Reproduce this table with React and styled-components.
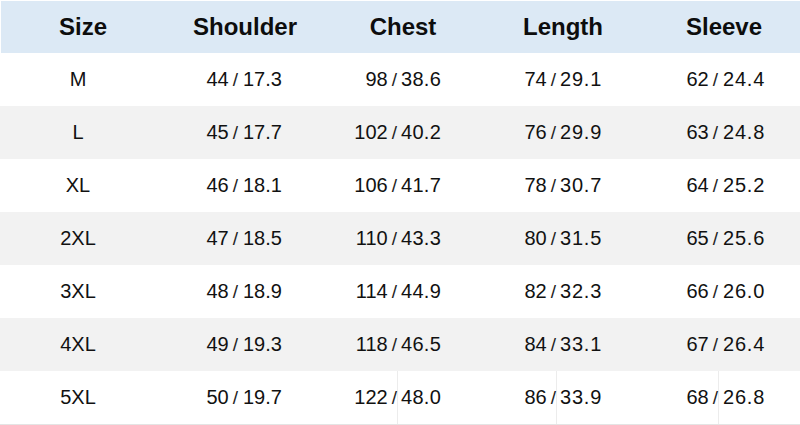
import React from "react";
import styled, { createGlobalStyle } from "styled-components";

const GlobalStyle = createGlobalStyle`
  html, body {
    margin: 0;
    padding: 0;
    background: #ffffff;
  }
  body {
    font-family: "Liberation Sans", Arial, sans-serif;
    color: #111111;
  }
`;

const COLS = "158px 82px 80px 78px 82px 77px 83px 79px 81px";

const Table = styled.div`
  width: 800px;
  padding-top: 1px;
  display: flex;
  flex-direction: column;
  border-bottom: 1px solid #e4e4e4;
`;

const HeaderRow = styled.div`
  display: grid;
  grid-template-columns: ${COLS};
  height: 52px;
  margin-left: 1px;
  background: #dce9f5;
  align-items: center;
`;

const HeadCell = styled.div`
  grid-column: span ${(p) => p.$span || 1};
  text-align: center;
  padding-left: ${(p) => p.$shift || 0}px;
  font-size: 24px;
  font-weight: 700;
  color: #0d0d0d;
  line-height: 1;
`;

const Row = styled.div`
  display: grid;
  grid-template-columns: ${COLS};
  height: 53px;
  background: ${(p) => (p.$shade ? "#f2f2f2" : "#ffffff")};
  align-items: stretch;
`;

const SizeCell = styled.div`
  display: flex;
  align-items: center;
  justify-content: center;
  padding-right: 2px;
  font-size: 20px;
`;

const CmCell = styled.div`
  display: flex;
  align-items: center;
  justify-content: flex-end;
  padding-right: ${(p) => p.$pr}px;
  font-size: 20px;
  border-right: 1px solid ${(p) => (p.$line ? "#ececec" : "transparent")};
`;

const Slash = styled.span`
  margin-left: 4px;
  font-size: 19px;
  color: #222;
`;

const InCell = styled.div`
  display: flex;
  align-items: center;
  justify-content: flex-start;
  padding-left: ${(p) => p.$pl}px;
  letter-spacing: ${(p) => p.$ls}px;
  font-size: 20px;
`;

const headers = [
  { label: "Size", span: 1, shift: 6 },
  { label: "Shoulder", span: 2, shift: 10 },
  { label: "Chest", span: 2, shift: 4 },
  { label: "Length", span: 2, shift: 4 },
  { label: "Sleeve", span: 2, shift: 6 },
];

const pads = [
  { pr: 1, pl: 3, ls: 0 },
  { pr: 0, pl: 3, ls: 0.3 },
  { pr: 0, pl: 3, ls: 0.8 },
  { pr: 0, pl: 4, ls: 0.8 },
];

const lines = [false, true, true, true];

const rows = [
  ["M", [44, "17.3"], [98, "38.6"], [74, "29.1"], [62, "24.4"]],
  ["L", [45, "17.7"], [102, "40.2"], [76, "29.9"], [63, "24.8"]],
  ["XL", [46, "18.1"], [106, "41.7"], [78, "30.7"], [64, "25.2"]],
  ["2XL", [47, "18.5"], [110, "43.3"], [80, "31.5"], [65, "25.6"]],
  ["3XL", [48, "18.9"], [114, "44.9"], [82, "32.3"], [66, "26.0"]],
  ["4XL", [49, "19.3"], [118, "46.5"], [84, "33.1"], [67, "26.4"]],
  ["5XL", [50, "19.7"], [122, "48.0"], [86, "33.9"], [68, "26.8"]],
];

export default function App() {
  return (
    <>
      <GlobalStyle />
      <Table>
        <HeaderRow>
          {headers.map((h) => (
            <HeadCell key={h.label} $span={h.span} $shift={h.shift}>
              {h.label}
            </HeadCell>
          ))}
        </HeaderRow>
        {rows.map((r, i) => {
          const last = i === rows.length - 1;
          return (
            <Row key={r[0]} $shade={i % 2 === 1}>
              <SizeCell>{r[0]}</SizeCell>
              {r.slice(1).map((m, j) => (
                <React.Fragment key={j}>
                  <CmCell $pr={pads[j].pr} $line={last && lines[j]}>
                    {m[0]}
                    <Slash>/</Slash>
                  </CmCell>
                  <InCell $pl={pads[j].pl} $ls={pads[j].ls}>
                    {m[1]}
                  </InCell>
                </React.Fragment>
              ))}
            </Row>
          );
        })}
      </Table>
    </>
  );
}
